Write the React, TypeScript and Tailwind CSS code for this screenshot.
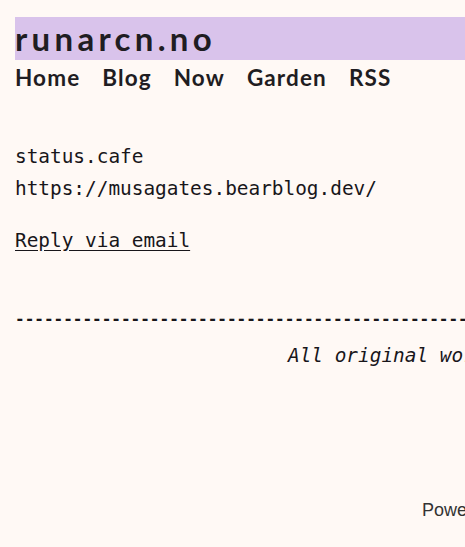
import React from 'react';

const navLinks = ['Home', 'Blog', 'Now', 'Garden', 'RSS'];

const App: React.FC = () => {
  return (
    <div className="w-[465px] h-[547px] overflow-hidden bg-[#fff9f5] text-[#1f1d22]">
      <div className="w-[760px] pl-[15px] pr-[15px]">
        {/* Header */}
        <header className="pt-[17px]">
          <div className="h-[43px] bg-[#d9c3eb] flex items-center">
            <span className="font-['Lato',sans-serif] font-bold text-[33px] tracking-[0.13em] leading-none">
              runarcn.no
            </span>
          </div>
          <nav className="flex gap-[22px] mt-[5px] font-['Lato',sans-serif] font-bold text-[22.5px] leading-[26px]">
            {navLinks.map((link) => (
              <a key={link} href="#" className="text-[#1f1d22] tracking-[0.05em]">
                {link}
              </a>
            ))}
          </nav>
        </header>

        {/* Main */}
        <main className="font-['DejaVu_Sans_Mono',monospace] text-[19.4px] leading-[32px] mt-[50px] text-[#18161a]">
          <p>status.cafe</p>
          <p>https://musagates.bearblog.dev/</p>
          <p className="mt-[20px]">
            <a href="#" className="underline underline-offset-[3px]">
              Reply via email
            </a>
          </p>
        </main>

        {/* Footer */}
        <footer className="mt-[52px] font-['DejaVu_Sans_Mono',monospace] text-[#18161a]">
          <div className="text-[16px] font-bold leading-[20px] whitespace-nowrap overflow-hidden">
            {'-'.repeat(80)}
          </div>
          <p className="italic text-[19.4px] leading-[32px] mt-[11px] pl-[273px] whitespace-nowrap">
            All original works © runarcn.no
          </p>
          <p className="mt-[125px] pl-[407px] font-['Liberation_Sans',sans-serif] text-[18px] text-[#333] whitespace-nowrap">
            Powered by Bear ʕ•ᴥ•ʔ
          </p>
        </footer>
      </div>
    </div>
  );
};

export default App;
